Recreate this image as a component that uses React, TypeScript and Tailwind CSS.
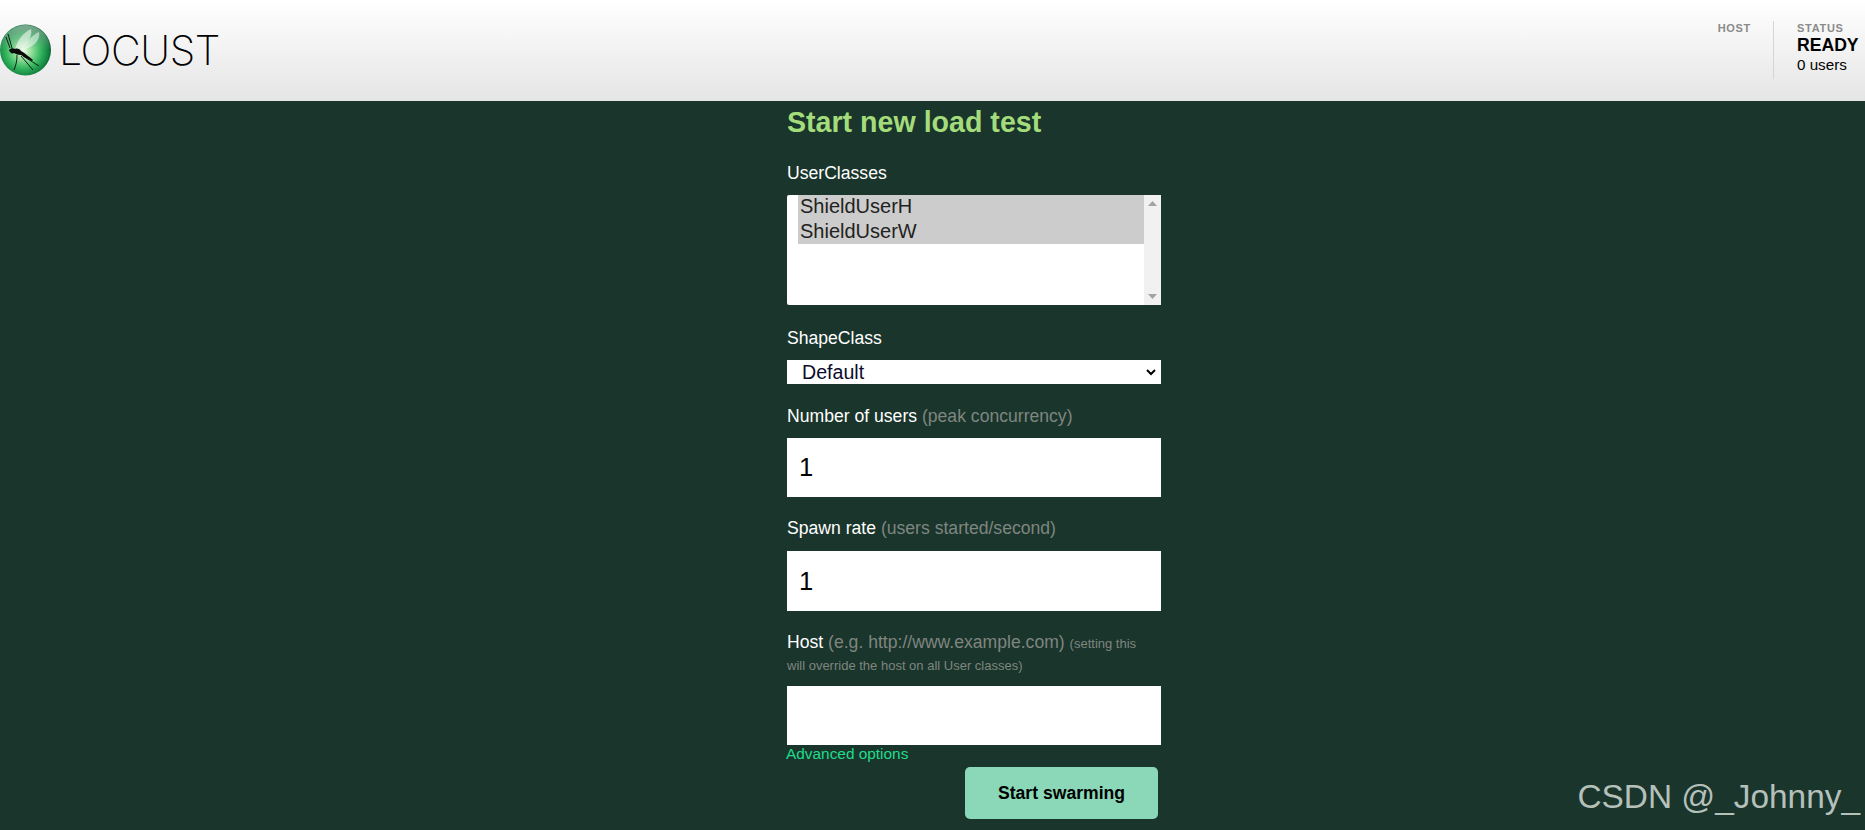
const sans = "font-['Liberation_Sans',Arial,sans-serif]";

function Logo() {
  return (
    <svg width="52" height="54" viewBox="0 0 52 54" className="shrink-0">
      <defs>
        <radialGradient id="ball" cx="0.46" cy="0.52" r="0.56">
          <stop offset="0" stopColor="#f4fbf0" />
          <stop offset="0.22" stopColor="#a8e6a8" />
          <stop offset="0.6" stopColor="#35b85f" />
          <stop offset="0.88" stopColor="#12813f" />
          <stop offset="1" stopColor="#0a4f2a" />
        </radialGradient>
        <linearGradient id="sheen" x1="0" y1="0" x2="0" y2="1">
          <stop offset="0" stopColor="#9fb8ac" stopOpacity="0.75" />
          <stop offset="0.5" stopColor="#9fb8ac" stopOpacity="0" />
        </linearGradient>
      </defs>
      <circle cx="25.5" cy="27" r="25.5" fill="url(#ball)" />
      <circle cx="25.5" cy="27" r="25" fill="url(#sheen)" />
      <path d="M15 27C17 17 24 9 31 6c2 7-4 18-16 21z" fill="#fff" opacity="0.55" />
      <path d="M19 27C26 20 33 11 39 9c2 8-6 17-20 18z" fill="#fff" opacity="0.5" />
      <path d="M9 27c2-2 4-2 6-1 2-1 5 0 6 2 4 2 8 6 12 9l-1 1c-4-2-8-4-11-6-3 0-5-1-7-2-2 1-4 0-5-3z" fill="#0a0a0a" />
      <path d="M12 25L8 11M10 25L6 14M17 32c0 6-1 10-3 15M21 33l12 14M23 33l16 10" stroke="#0a0a0a" strokeWidth="0.9" fill="none" />
    </svg>
  );
}

function FieldLabel({ title, hint }: { title: string; hint?: string }) {
  return (
    <label className="block text-[17.6px] leading-[20px] text-white">
      {title}
      {hint && <span className="text-[#7f8680]"> {hint}</span>}
    </label>
  );
}

export default function App() {
  return (
    <div className={`${sans} relative h-[830px] overflow-hidden bg-[#1a352b]`}>
      <header className="flex h-[101px] items-start justify-between bg-gradient-to-b from-white to-[#e5e5e5]">
        <div className="mt-[23px] flex items-center">
          <Logo />
          <span className="ml-[7px] font-['Inter',sans-serif] text-[41px] leading-[54px] font-extralight tracking-[-0.4px] text-black">
            LOCUST
          </span>
        </div>
        <div className="mt-[21px] flex">
          <div className="pt-[1px] pr-[22px] text-[11px] leading-[13px] font-bold tracking-[0.7px] text-[#8a8a8a]">
            HOST
          </div>
          <div className="h-[58px] w-[92px] border-l border-[#d5d5d5] pl-[23px]">
            <div className="pt-[1px] text-[11px] leading-[13px] font-bold tracking-[0.7px] text-[#8a8a8a]">
              STATUS
            </div>
            <div className="text-[17.6px] leading-[20px] font-bold text-black">READY</div>
            <div className="mt-[1px] text-[15.2px] leading-[18px] text-black">0 users</div>
          </div>
        </div>
      </header>

      <main className="ml-[787px] w-[374px]">
        <h2 className="mt-[5px] text-[28.6px] leading-[32px] font-bold text-[#a4dc7c]">Start new load test</h2>

        <div className="mt-[25px]">
          <FieldLabel title="UserClasses" />
        </div>
        <div className="mt-[12px] flex h-[110px] rounded-[2px] bg-white">
          <div className="flex-1 pl-[11px]">
            <div className="h-[49px] bg-[#cccccc] pl-[2px] text-[20px] leading-[24.5px] text-[#222222]">
              <div className="-translate-y-[1px]">ShieldUserH</div>
              <div className="-translate-y-[1px]">ShieldUserW</div>
            </div>
          </div>
          <div className="flex w-[17px] flex-col items-center justify-between bg-[#f1f1f1] py-[6px]">
            <svg width="9" height="5" viewBox="0 0 9 5"><path d="M4.5 0L9 5H0z" fill="#a3a3a3" /></svg>
            <svg width="9" height="5" viewBox="0 0 9 5"><path d="M0 0h9L4.5 5z" fill="#a3a3a3" /></svg>
          </div>
        </div>

        <div className="mt-[23px]">
          <FieldLabel title="ShapeClass" />
        </div>
        <div className="relative mt-[12px] h-[24px] bg-white">
          <select className="h-full w-full appearance-none bg-transparent pl-[15px] text-[19.6px] leading-[24px] text-[#0c0c2c] outline-none">
            <option>Default</option>
          </select>
          <svg width="10" height="7" viewBox="0 0 10 7" className="pointer-events-none absolute top-[9px] right-[5px]">
            <path d="M1 1l4 4 4-4" stroke="#000" strokeWidth="2" fill="none" />
          </svg>
        </div>

        <div className="mt-[22px]">
          <FieldLabel title="Number of users" hint="(peak concurrency)" />
        </div>
        <input
          readOnly
          value="1"
          className="mt-[12px] block h-[59px] w-full bg-white px-[12px] text-[25.6px] text-black outline-none"
        />

        <div className="mt-[21px]">
          <FieldLabel title="Spawn rate" hint="(users started/second)" />
        </div>
        <input
          readOnly
          value="1"
          className="mt-[13px] block h-[60px] w-full bg-white px-[12px] text-[25.6px] text-black outline-none"
        />

        <div className="mt-[21px] text-[17.6px] leading-[20px] text-white">
          Host <span className="text-[#7f8680]">(e.g. http://www.example.com)</span>{" "}
          <span className="text-[13px] text-[#7f8680]">
            (setting this
            <br />
            will override the host on all User classes)
          </span>
        </div>
        <input readOnly className="mt-[10px] block h-[59px] w-full bg-white outline-none" />

        <a className="-ml-[1px] block text-[15.4px] leading-[18px] text-[#1fdc8c]">Advanced options</a>
        <div className="mt-[4px] flex justify-end pr-[3px]">
          <button className="h-[52px] w-[193px] rounded-[5px] bg-[#8ad8b8] text-[17.6px] font-bold text-black">
            Start swarming
          </button>
        </div>
      </main>

      <div className="absolute right-[5px] bottom-[14px] text-[33.4px] leading-[38px] text-[#b5c0bb]">
        CSDN @_Johnny_
      </div>
    </div>
  );
}
